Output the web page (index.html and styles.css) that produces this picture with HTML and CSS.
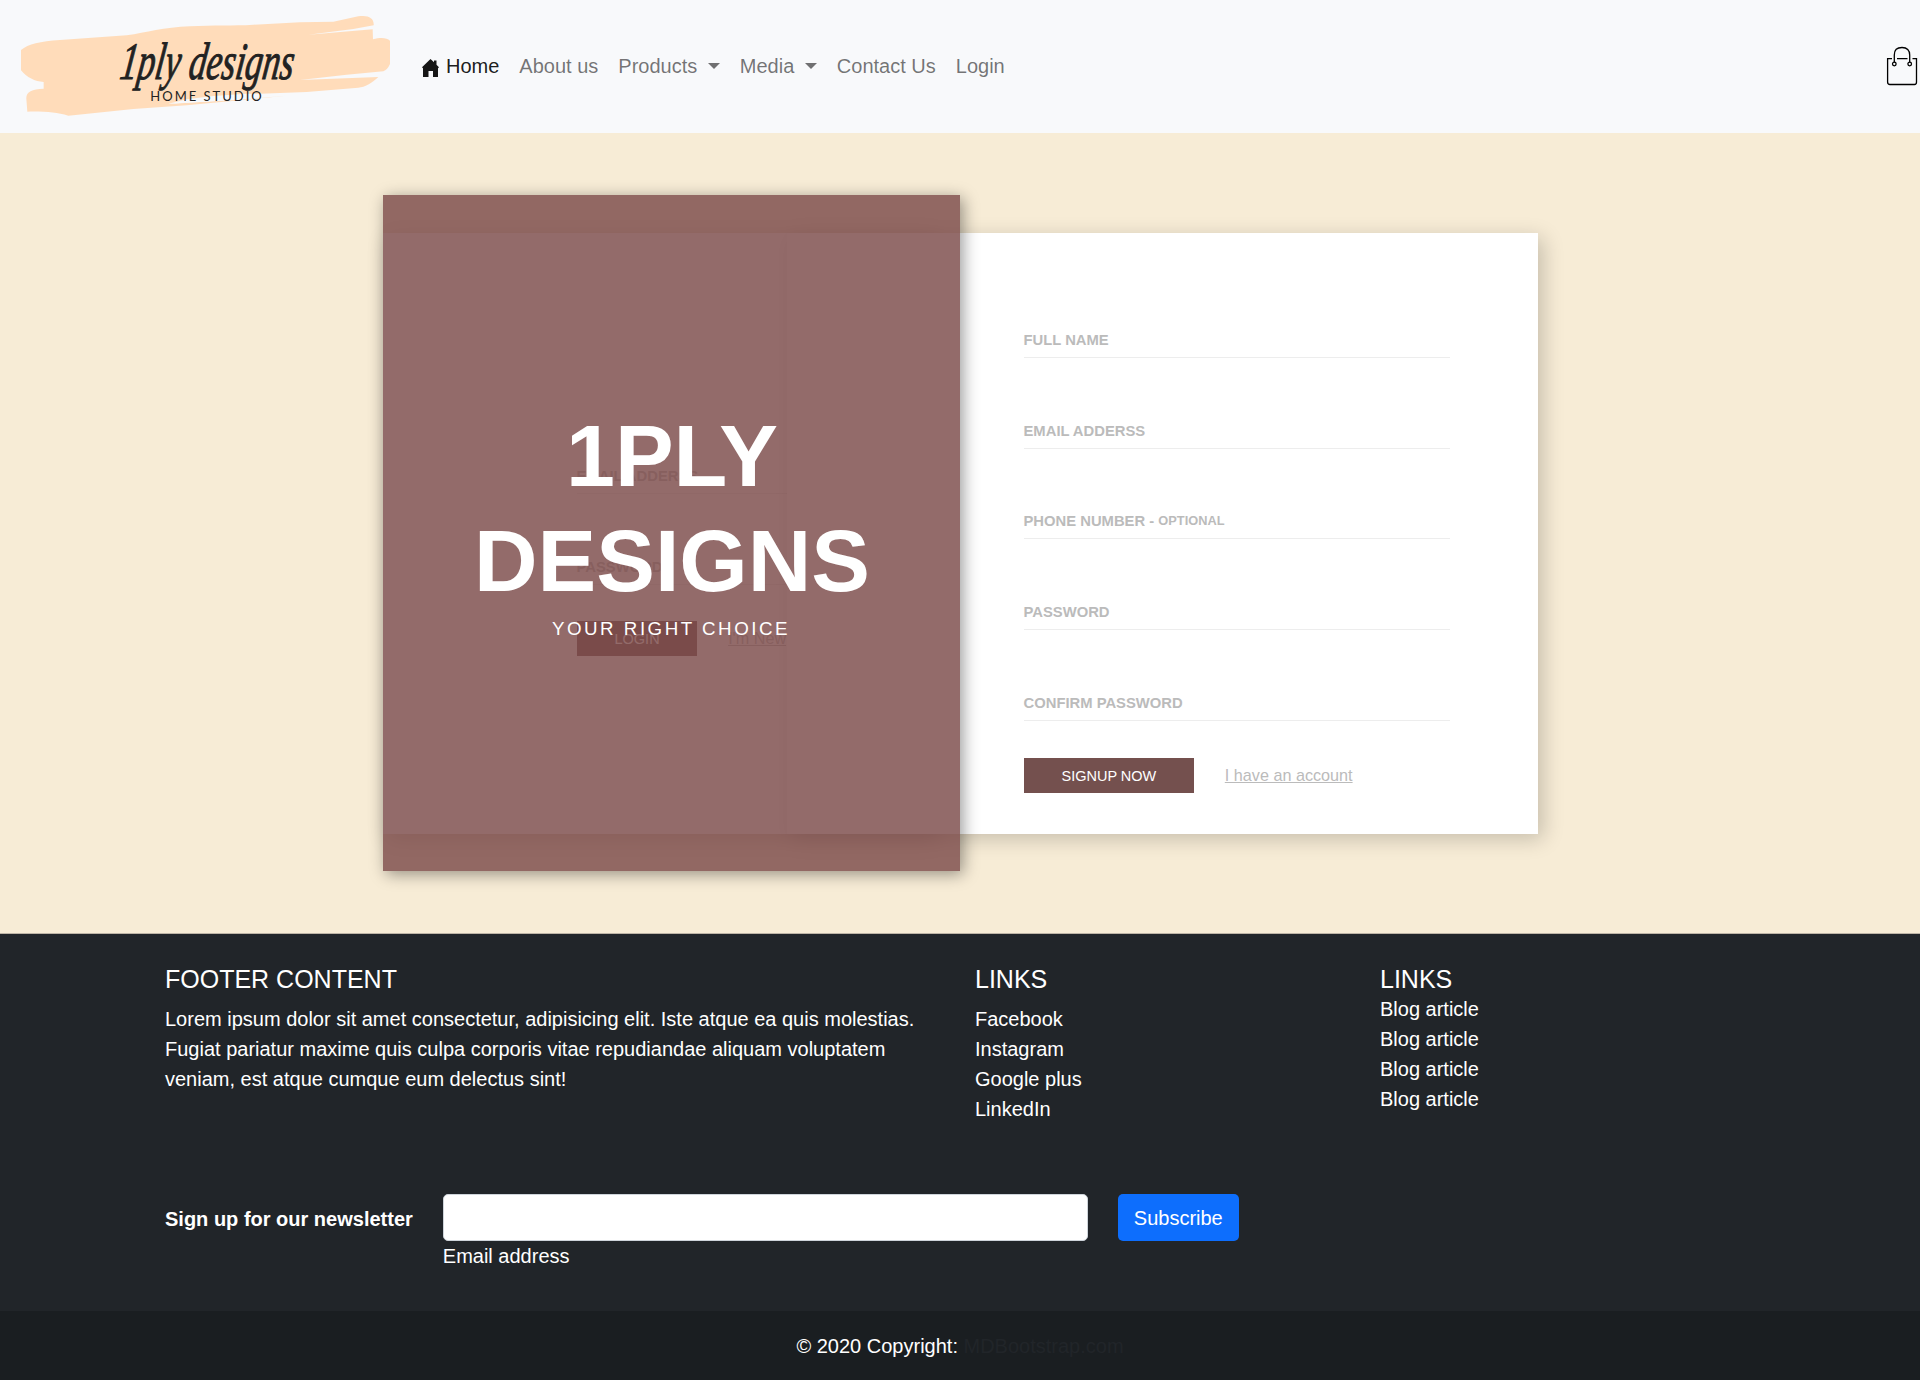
FILE: index.html
```html
<!DOCTYPE html>
<html lang="en">
<head>
<meta charset="utf-8">
<title>1ply designs</title>
<link rel="stylesheet" href="styles.css">
</head>
<body>
<nav class="navbar">
  <a class="brand">
    <svg viewBox="0 0 1230 399" width="410" height="133">
      <path fill="#ffdcba" d="M63 150C85 132 120 124 180 120L380 106C440 98 490 82 570 79C640 74 700 78 760 74L900 67L1000 65L1075 49C1105 44 1123 54 1121 76L1060 87L925 104L1118 88L1119 118C1140 112 1160 112 1170 122V192Q1162 210 1150 214L1040 224L900 240L1135 231C1115 250 1095 262 1075 263L920 276L780 281L640 291L505 312L700 300L860 287L560 316L400 327L205 347C170 338 140 334 82 335L79 296C78 276 95 267 131 266V246C105 245 80 232 63 211Z"/>
      <path fill="#f8f9fb" d="M505 311L560 298L640 288L740 281L860 286L700 300Z"/>
      <text class="brand-script" transform="translate(356 237) skewX(-8)" textLength="520" lengthAdjust="spacingAndGlyphs">1ply designs</text>
      <text class="brand-sub" x="451" y="304" textLength="334">HOME STUDIO</text>
    </svg>
  </a>
  <div class="nav-links">
    <a class="nav-link active"><svg class="home-icon" viewBox="0 0 17 18" width="17" height="18"><path d="M8.5 0L12 3.3V1.5H14.5V5.7L17 8.3L16 9.2V18H11V12H6.5V18H1V9.2L0 8.3Z"/></svg>Home</a>
    <a class="nav-link">About us</a>
    <a class="nav-link dropdown">Products </a>
    <a class="nav-link dropdown">Media </a>
    <a class="nav-link">Contact Us</a>
    <a class="nav-link">Login</a>
  </div>
  <svg class="bag" viewBox="0 0 34 40" width="34" height="40">
    <g fill="none" stroke="#000" stroke-width="1.3">
      <path d="M6 2.6H1.6V26Q1.6 28.5 4 28.5H28.5Q30.5 28.5 30.5 26V2.6H26.5M11 2.6H21.500"/>
      <circle cx="8.300" cy="8" r="1.800"/><circle cx="23.700" cy="8" r="1.800"/>
      <path d="M8.300 6.500V-1Q8.300 -8.500 16 -8.500Q23.700 -8.500 23.700 -1V6.500"/>
    </g>
  </svg>
</nav>

<main class="main">
  <div class="auth">
    <form class="card login">
      <label class="field">EMAIL ADDERSS</label>
      <label class="field">PASSWORD</label>
      <div class="actions"><a class="submit">LOGIN</a><a class="switch">I'm New</a></div>
    </form>
    <form class="card signup">
      <label class="field">FULL NAME</label>
      <label class="field">EMAIL ADDERSS</label>
      <label class="field">PHONE NUMBER - <small>OPTIONAL</small></label>
      <label class="field">PASSWORD</label>
      <label class="field">CONFIRM PASSWORD</label>
      <div class="actions"><a class="submit">SIGNUP NOW</a><a class="switch">I have an account</a></div>
    </form>
    <section class="panel">
      <h1>1PLY<br>DESIGNS</h1>
      <p>YOUR RIGHT CHOICE</p>
    </section>
  </div>
</main>

<footer class="footer">
  <div class="footer-container">
    <div class="footer-row">
      <div>
        <h5>FOOTER CONTENT</h5>
        <p>Lorem ipsum dolor sit amet consectetur, adipisicing elit. Iste atque ea quis molestias. Fugiat pariatur maxime quis culpa corporis vitae repudiandae aliquam voluptatem veniam, est atque cumque eum delectus sint!</p>
      </div>
      <div>
        <h5>LINKS</h5>
        <ul><li>Facebook</li><li>Instagram</li><li>Google plus</li><li>LinkedIn</li></ul>
      </div>
      <div>
        <h5 class="tight">LINKS</h5>
        <ul><li>Blog article</li><li>Blog article</li><li>Blog article</li><li>Blog article</li></ul>
      </div>
    </div>
    <form class="newsletter">
      <strong>Sign up for our newsletter</strong>
      <div class="email"><input type="email" id="email"><label for="email">Email address</label></div>
      <button type="button">Subscribe</button>
    </form>
  </div>
  <div class="copyright">© 2020 Copyright: <a>MDBootstrap.com</a></div>
</footer>
</body>
</html>
```
FILE: styles.css
```css
* { box-sizing: border-box; }
body {
  margin: 0;
  font: 20px/30px "Liberation Sans", Arial, sans-serif;
  background: #f7ecd6;
  color: #212529;
}
h1, h5, p, ul { margin: 0; padding: 0; }

.navbar {
  display: flex;
  align-items: center;
  height: 133px;
  background: #f8f9fb;
}
.brand { display: block; width: 410px; height: 133px; }
.brand svg { display: block; }
.brand-script {
  font: italic 158px "Liberation Serif", serif;
  fill: #222;
  stroke: #222;
  stroke-width: 3px;
}
.brand-sub { font: 400 39px Lato, sans-serif; fill: #222; }
.nav-links { display: flex; padding: 0 0 2px 2px; }
.nav-link {
  display: flex;
  align-items: center;
  padding: 0 10px;
  white-space: pre;
  color: rgba(0, 0, 0, .55);
}
.nav-link.active { color: rgba(0, 0, 0, .9); }
.home-icon { margin: 5px 7px 0 0; fill: #161616; }
.dropdown::after {
  content: "";
  margin-left: 5px;
  border: 6px solid transparent;
  border-top-color: currentColor;
  border-bottom: 0;
}
.bag { margin-left: auto; margin-top: 18px; overflow: visible; }

.main {
  display: flex;
  justify-content: center;
  align-items: flex-start;
  height: 801px;
  padding-top: 62px;
  border-bottom: 1px solid #bdb4a6;
}
.auth {
  display: grid;
  width: 1155px;
  height: 676px;
}
.card {
  grid-area: 1 / 1;
  align-self: start;
  margin-top: 38px;
  height: 601px;
  background: #fff;
  box-shadow: 5px 5px 20px rgba(0, 0, 0, .2);
}
.login { justify-self: start; width: 550px; padding: 170px 60px 0 194px; }
.signup { justify-self: end; width: 751px; padding: 34px 88px 0 237px; }
.field {
  display: flex;
  align-items: flex-end;
  height: 90.75px;
  padding-bottom: 7px;
  border-bottom: 1px solid #ededed;
  font-size: 14.8px;
  line-height: 20px;
  font-weight: bold;
  color: #bbb;
  white-space: pre;
}
.field small { font-size: 12.8px; }
.actions {
  display: flex;
  align-items: center;
  gap: 31px;
  margin-top: 37px;
}
.login .actions { margin-top: 36px; }
.submit {
  height: 35px;
  padding: 0 37.5px 0 38px;
  background: #74504e;
  color: #fff;
  font-size: 14.5px;
  line-height: 36px;
}
.switch {
  font-size: 16.2px;
  line-height: 35px;
  color: #bbb;
  text-decoration: underline;
}
.panel {
  grid-area: 1 / 1;
  z-index: 1;
  width: 577px;
  display: flex;
  flex-direction: column;
  align-items: center;
  padding-top: 208px;
  background: rgba(123, 74, 73, .82);
  box-shadow: 3px 3px 15px rgba(0, 0, 0, .4);
  color: #fff;
  text-align: center;
}
.panel h1 { padding-left: 2px; font-size: 88px; line-height: 105px; }
.panel p {
  margin-top: 1px;
  font-size: 18.75px;
  letter-spacing: 2.5px;
}

.footer { background: #212529; color: #fff; }
.footer-container {
  width: 1650px;
  margin: 0 auto;
  height: 377px;
  padding: 30px 15px 0;
}
.footer-row {
  display: grid;
  grid-template-columns: 2fr 1fr 1fr;
  height: 230px;
}
.footer-row > div { padding: 0 15px; }
.footer h5 {
  margin-bottom: 10px;
  font-size: 25px;
  font-weight: normal;
  line-height: 30px;
}
.footer h5.tight { margin-bottom: 0; }
.footer ul { list-style: none; }
.newsletter { display: flex; align-items: flex-start; gap: 30px; padding-left: 15px; }
.newsletter strong { padding-top: 10px; }
.email { width: 645px; }
.email input {
  display: block;
  width: 100%;
  height: 47px;
  border: 1px solid #ced4da;
  border-radius: 5px;
  background: #fff;
}
.newsletter button {
  height: 47px;
  padding: 0 16px;
  border: 0;
  border-radius: 5px;
  background: #0d6efd;
  color: #fff;
  font: inherit;
}
.copyright { padding: 20px 0; height: 69px; text-align: center; background: #1a1e21; }
.copyright a { color: #212529; }
```
